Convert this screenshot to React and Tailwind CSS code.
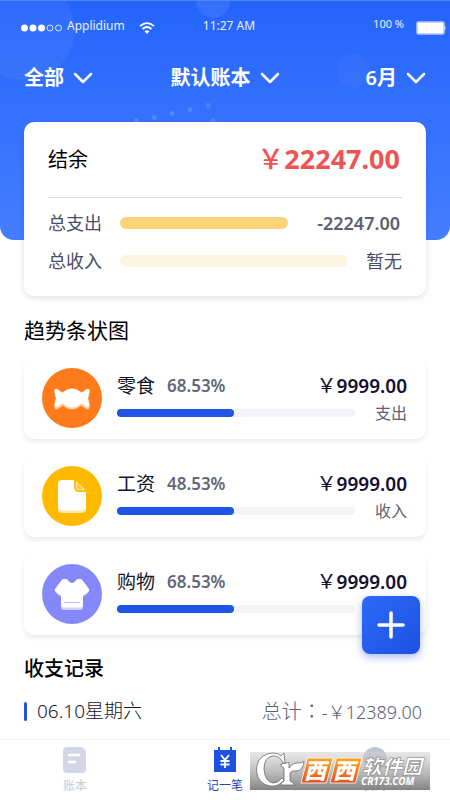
import React from "react";

const SnackIcon = () => (
  <svg viewBox="0 0 60 60" className="w-[60px] h-[60px] shrink-0" aria-hidden="true">
    <circle cx="30" cy="30" r="30" fill="#ff7a1a" />
    <g fill="#ffc69b">
      <ellipse cx="30" cy="32" rx="11" ry="9.5" />
      <path d="M12.5 24Q12 22.500 14 22.500L22 26V37L16 41Q12 42.500 12.500 38L14 31Z" />
      <path d="M47.500 24Q48 22.500 46 22.500L38 26V37L44 41Q48 42.500 47.500 38L46 31Z" />
    </g>
    <g fill="#fff">
      <ellipse cx="30" cy="30" rx="11" ry="9.5" />
      <path d="M12.300 23.500Q12 20 15.500 21L20 24.500L24 24V36L20 35.500L15.500 39Q12 40 12.500 36L14 30Z" />
      <path d="M47.700 23.500Q48 20 44.500 21L40 24.500L36 24V36L40 35.500L44.500 39Q48 40 47.500 36L46 30Z" />
    </g>
  </svg>
);

const SalaryIcon = () => (
  <svg viewBox="0 0 60 60" className="w-[60px] h-[60px] shrink-0" aria-hidden="true">
    <circle cx="30" cy="30" r="30" fill="#ffba00" />
    <rect x="16" y="32" width="28" height="15" rx="4" fill="#ffe6a3" />
    <path
      d="M20 14H32V21Q32 26 37 26H44V40.500Q44 44.500 40 44.500H20Q16 44.500 16 40.500V18Q16 14 20 14Z"
      fill="#fff"
    />
    <path
      d="M34.300 16V21.500Q34.300 23.700 36.500 23.700H42.500Z"
      fill="#ffc93d"
      stroke="#ffefc0"
      strokeWidth="1"
      strokeLinejoin="round"
    />
  </svg>
);

const ShoppingIcon = () => (
  <svg viewBox="0 0 60 60" className="w-[60px] h-[60px] shrink-0" aria-hidden="true">
    <circle cx="30" cy="30" r="30" fill="#8488f9" />
    <path
      d="M13 28L18.500 32.500H19V43Q19 46 22 46H38Q41 46 41 43V32.500H41.500L47 28L40 22H20Z"
      fill="#cfd0ff"
    />
    <path
      d="M22 15H24Q25.500 15 26.500 17Q30 21 33.500 17Q34.500 15 36 15H38Q39.500 15 40.500 16.200L47 25Q47.800 26.200 46.700 27.200L43 30.300Q42.300 31 41 31V40.500Q41 43.500 38 43.500H22Q19 43.500 19 40.500V31Q17.700 31 17 30.300L13.300 27.200Q12.200 26.200 13 25L19.500 16.200Q20.500 15 22 15Z"
      fill="#fff"
    />
    <path d="M22 38.500H38" stroke="#b9bbff" strokeWidth="1" />
  </svg>
);

const ChevronDown = () => (
  <svg viewBox="0 0 20 12" className="w-5 h-3" fill="none" aria-hidden="true">
    <path
      d="M2 2L10 10L18 2"
      stroke="#fff"
      strokeWidth="2.500"
      strokeLinecap="round"
      strokeLinejoin="round"
    />
  </svg>
);

const items = [
  { name: "零食", percent: "68.53%", type: "支出", icon: SnackIcon },
  { name: "工资", percent: "48.53%", type: "收入", icon: SalaryIcon },
  { name: "购物", percent: "68.53%", type: "支出", icon: ShoppingIcon },
];

const StatusBar = () => (
  <div className="relative flex items-center h-[50px] pl-[21px] pr-1 text-white/90">
    <svg viewBox="0 0 42 10" className="w-[42px] h-[10px] mt-1" aria-hidden="true">
      <circle cx="3.500" cy="5" r="3.500" fill="#fff" />
      <circle cx="12" cy="5" r="3.500" fill="#fff" />
      <circle cx="20.500" cy="5" r="3.500" fill="#fff" />
      <circle cx="29" cy="5" r="3" fill="none" stroke="#fff" strokeWidth="0.800" />
      <circle cx="37.500" cy="5" r="3" fill="none" stroke="#fff" strokeWidth="0.800" />
    </svg>
    <span className="ml-1 text-[12px]">Applidium</span>
    <svg viewBox="0 0 16 12" className="w-4 h-3 ml-[14px] mt-1" fill="none" aria-hidden="true">
      <path d="M1 4.200Q8 -2 15 4.200" stroke="#fff" strokeWidth="1.700" />
      <path d="M3.500 7Q8 3 12.500 7" stroke="#fff" strokeWidth="1.700" />
      <path d="M5.500 9.300Q8 7 10.500 9.300L8 12Z" fill="#fff" />
    </svg>
    <span className="absolute inset-x-0 text-center text-[12px] pl-2">11:27 AM</span>
    <span className="ml-auto text-[11px] -mt-1">100 %</span>
    <svg viewBox="0 0 30 14" className="w-[30px] h-[14px] ml-3 mt-1" aria-hidden="true">
      <rect x="1" y="1" width="27" height="12" rx="1.500" fill="#fff" stroke="#b3c6ff" strokeWidth="1.500" />
      <path d="M28.500 4.500Q30.500 7 28.500 9.500Z" fill="#fff" />
    </svg>
  </div>
);

const HeaderPattern = () => (
  <svg viewBox="0 0 450 240" className="absolute inset-0 w-full h-full" aria-hidden="true">
    <circle cx="23" cy="29" r="51" fill="#fff" opacity="0.050" />
    <circle cx="213" cy="0" r="17" fill="#fff" opacity="0.080" />
    <circle cx="354" cy="70" r="17" fill="#fff" opacity="0.030" />
    <g fill="#8ab0ff" opacity="0.350">
      <circle cx="136" cy="120" r="2.500" />
      <circle cx="154" cy="117" r="2.500" />
      <circle cx="172" cy="113" r="2.500" />
      <circle cx="190" cy="109" r="2.500" />
      <circle cx="208" cy="105" r="2.500" />
      <circle cx="213" cy="120" r="2.500" />
    </g>
  </svg>
);

const FilterButton = ({ label }) => (
  <button type="button" className="flex items-center gap-[9px]">
    <span>{label}</span>
    <ChevronDown />
  </button>
);

const BalanceCard = () => (
  <section className="relative -mt-[118px] mx-6 px-6 h-[174px] rounded-[10px] bg-white shadow-[0_2px_6px_rgba(0,0,0,0.12)]">
    <div className="flex items-center justify-between h-[76px] pr-[2px] border-b border-[#d9d9de]">
      <h2 className="text-[20px] text-black">结余</h2>
      <span className="text-[27px] font-bold text-[#ef5455]">
        <span className="font-medium">￥</span>22247.00
      </span>
    </div>
    <div className="pt-[6px] text-[18px] text-[#4a4d66]">
      <div className="flex items-center h-[38px] pr-[2px]">
        <span className="w-[72px]">总支出</span>
        <div className="w-[168px] h-3 rounded-full bg-[#fcd477]" />
        <span className="ml-auto font-semibold text-[#5d6074]">-22247.00</span>
      </div>
      <div className="flex items-center h-[38px]">
        <span className="w-[72px]">总收入</span>
        <div className="flex-1 h-3 rounded-full bg-[#fdf5e1]" />
        <span className="ml-[18px]">暂无</span>
      </div>
    </div>
  </section>
);

const TrendCard = ({ item }) => {
  const Icon = item.icon;

  return (
    <li className="flex items-center gap-[15px] h-[82px] pl-[18px] pr-[19px] rounded-[10px] bg-white shadow-[0_3px_5px_rgba(0,0,0,0.08)]">
      <Icon />
      <div className="flex-1 pt-[2px]">
        <div className="flex items-center h-7">
          <span className="text-[19px] text-[#14142b]">{item.name}</span>
          <span className="ml-3 text-[17px] font-semibold text-[#646778]">
            {item.percent}
          </span>
          <span className="ml-auto text-[19px] font-semibold text-[#14102f]">
            <span className="text-[20px] font-normal">￥</span>9999.00
          </span>
        </div>
        <div className="flex items-center h-[26px]">
          <div className="flex-1 h-2 rounded-full bg-[#f3f4f8]">
            <div className="w-[49%] h-2 rounded-full bg-[#2054e4]" />
          </div>
          <span className="ml-5 text-[16px] text-[#5d6074]">{item.type}</span>
        </div>
      </div>
    </li>
  );
};

const Watermark = () => (
  <svg
    viewBox="0 0 180 38"
    className="absolute right-5 bottom-[10px] w-[180px] h-[38px]"
    aria-hidden="true"
  >
    <defs>
      <linearGradient id="wm-bg" x1="0" y1="0" x2="0" y2="1">
        <stop offset="0" stopColor="#d0d0d0" stopOpacity="0.500" />
        <stop offset="1" stopColor="#757575" stopOpacity="0.900" />
      </linearGradient>
      <linearGradient id="wm-orange" x1="0" y1="0" x2="0" y2="1">
        <stop offset="0" stopColor="#ffa51f" />
        <stop offset="1" stopColor="#e8501c" />
      </linearGradient>
    </defs>
    <rect width="180" height="38" fill="url(#wm-bg)" />
    <g fill="#fff" stroke="#6b6b6b" strokeWidth="0.800">
      <path d="M34 1L35 11H33Q30 3 22 4Q14 6 14 17Q15 30 23 31Q28 31 32 26L34 28Q29 35 20 34Q8 32 6.500 19Q6 5 19 1.500Q27 0 31 4Z" />
      <path d="M31 12L39 10.500V16Q42 11 47 11Q51 11.500 54 9.500Q53 19 46 19Q42 18 40 21V29L44 31.500V33H31V31.500L34 29V16L31 14Z" />
    </g>
    <g fill="url(#wm-orange)" stroke="#fff" strokeWidth="0.800">
      <path d="M57.500 6H83L76.500 31H51Z" />
      <path d="M86.500 6H112L105.500 31H80Z" />
    </g>
    <g
      fill="#fff"
      fontFamily="'Noto Sans CJK SC', sans-serif"
      fontWeight="900"
      fontStyle="italic"
    >
      <text x="54" y="27" fontSize="22">西</text>
      <text x="83" y="27" fontSize="22">西</text>
      <text x="112" y="22" fontSize="20" stroke="#777" strokeWidth="0.500">软件园</text>
      <text
        x="111"
        y="33"
        fontSize="10"
        fontFamily="'Noto Sans', sans-serif"
        fontWeight="700"
      >
        CR173.COM
      </text>
    </g>
  </svg>
);

const TabBar = () => (
  <nav className="relative h-[61px] border-t border-[#f3f3f5] grid grid-cols-3 text-[12px]">
    <a href="#book" className="flex flex-col items-center pt-[7px] gap-1 text-[#c9cad6]">
      <svg viewBox="0 0 24 26" className="w-6 h-[26px]" aria-hidden="true">
        <path d="M4 0H18Q23 1 23 7V22Q23 26 19 26H4Q0 26 0 22V4Q0 0 4 0Z" fill="#d5d6e5" />
        <path d="M5 8H17M5 15H13" stroke="#fff" strokeWidth="2.500" />
      </svg>
      <span>账本</span>
    </a>
    <a href="#add" className="flex flex-col items-center pt-[7px] gap-1 text-[#2748b8]">
      <svg viewBox="0 0 24 26" className="w-6 h-[26px]" fill="none" aria-hidden="true">
        <path d="M1 3H5V0H7V3H17V0H19V3H23V25H1Z" fill="#1f50e0" />
        <path
          d="M8 8L12 13L16 8M7.500 14H16.500M7.500 17.500H16.500M12 13V21"
          stroke="#fff"
          strokeWidth="1.800"
        />
      </svg>
      <span>记一笔</span>
    </a>
    <a href="#me" className="flex flex-col items-center pt-[7px] gap-1 text-[#c9cad6]">
      <svg viewBox="0 0 24 26" className="w-6 h-[26px]" aria-hidden="true">
        <circle cx="12" cy="12" r="12" fill="#c3c5d6" />
      </svg>
      <span>我的</span>
    </a>
    <Watermark />
  </nav>
);

const App = () => {
  return (
    <div className="relative min-h-screen flex flex-col bg-white font-['Noto_Sans','Noto_Sans_CJK_SC',sans-serif]">
      {/* HEADER */}
      <header className="relative h-[240px] overflow-hidden rounded-b-[14px] border-t border-[#4b86f5] bg-linear-to-b from-[#2464fb] to-[#447eff]">
        <HeaderPattern />
        <StatusBar />
        <div className="relative grid grid-cols-[1fr_auto_1fr] items-center h-[54px] px-6 text-[20px] font-semibold text-white">
          <FilterButton label="全部" />
          <FilterButton label="默认账本" />
          <div className="flex justify-end">
            <FilterButton label="6月" />
          </div>
        </div>
      </header>

      <main className="flex-1">
        <BalanceCard />

        {/* TREND */}
        <section className="px-6 pt-[18px]">
          <h2 className="h-8 leading-8 text-[21px] text-black">趋势条状图</h2>
          <ul className="mt-[11px] space-y-4">
            {items.map((item) => (
              <TrendCard key={item.name} item={item} />
            ))}
          </ul>
        </section>

        {/* RECORDS */}
        <section className="px-6 pt-[18px]">
          <h2 className="h-8 leading-8 text-[20px] font-medium text-black">收支记录</h2>
          <div className="flex items-center mt-[10px] h-8">
            <div className="w-[3px] h-[19px] rounded-full bg-[#2054e4]" />
            <span className="ml-[10px] text-[19px] font-light text-[#14142b]">
              06.10星期六
            </span>
            <span className="ml-auto pr-1 text-[18px] font-light text-[#5d6074]">
              <span className="text-[20px] font-['Noto_Sans_CJK_TC',sans-serif]" lang="zh-TW">
                总计：
              </span>
              -￥12389.00
            </span>
          </div>
        </section>
      </main>

      <TabBar />

      <button
        type="button"
        aria-label="记一笔"
        className="absolute right-[30px] bottom-[146px] w-[58px] h-[58px] flex items-center justify-center rounded-lg bg-linear-to-br from-[#2d6af8] to-[#1d50e0] shadow-[0_3px_8px_rgba(32,84,228,0.4)]"
      >
        <svg viewBox="0 0 28 28" className="w-7 h-7" aria-hidden="true">
          <path
            d="M14 2V26M2 14H26"
            stroke="#fff"
            strokeWidth="3.500"
            strokeLinecap="round"
          />
        </svg>
      </button>
    </div>
  );
};

export default App;
